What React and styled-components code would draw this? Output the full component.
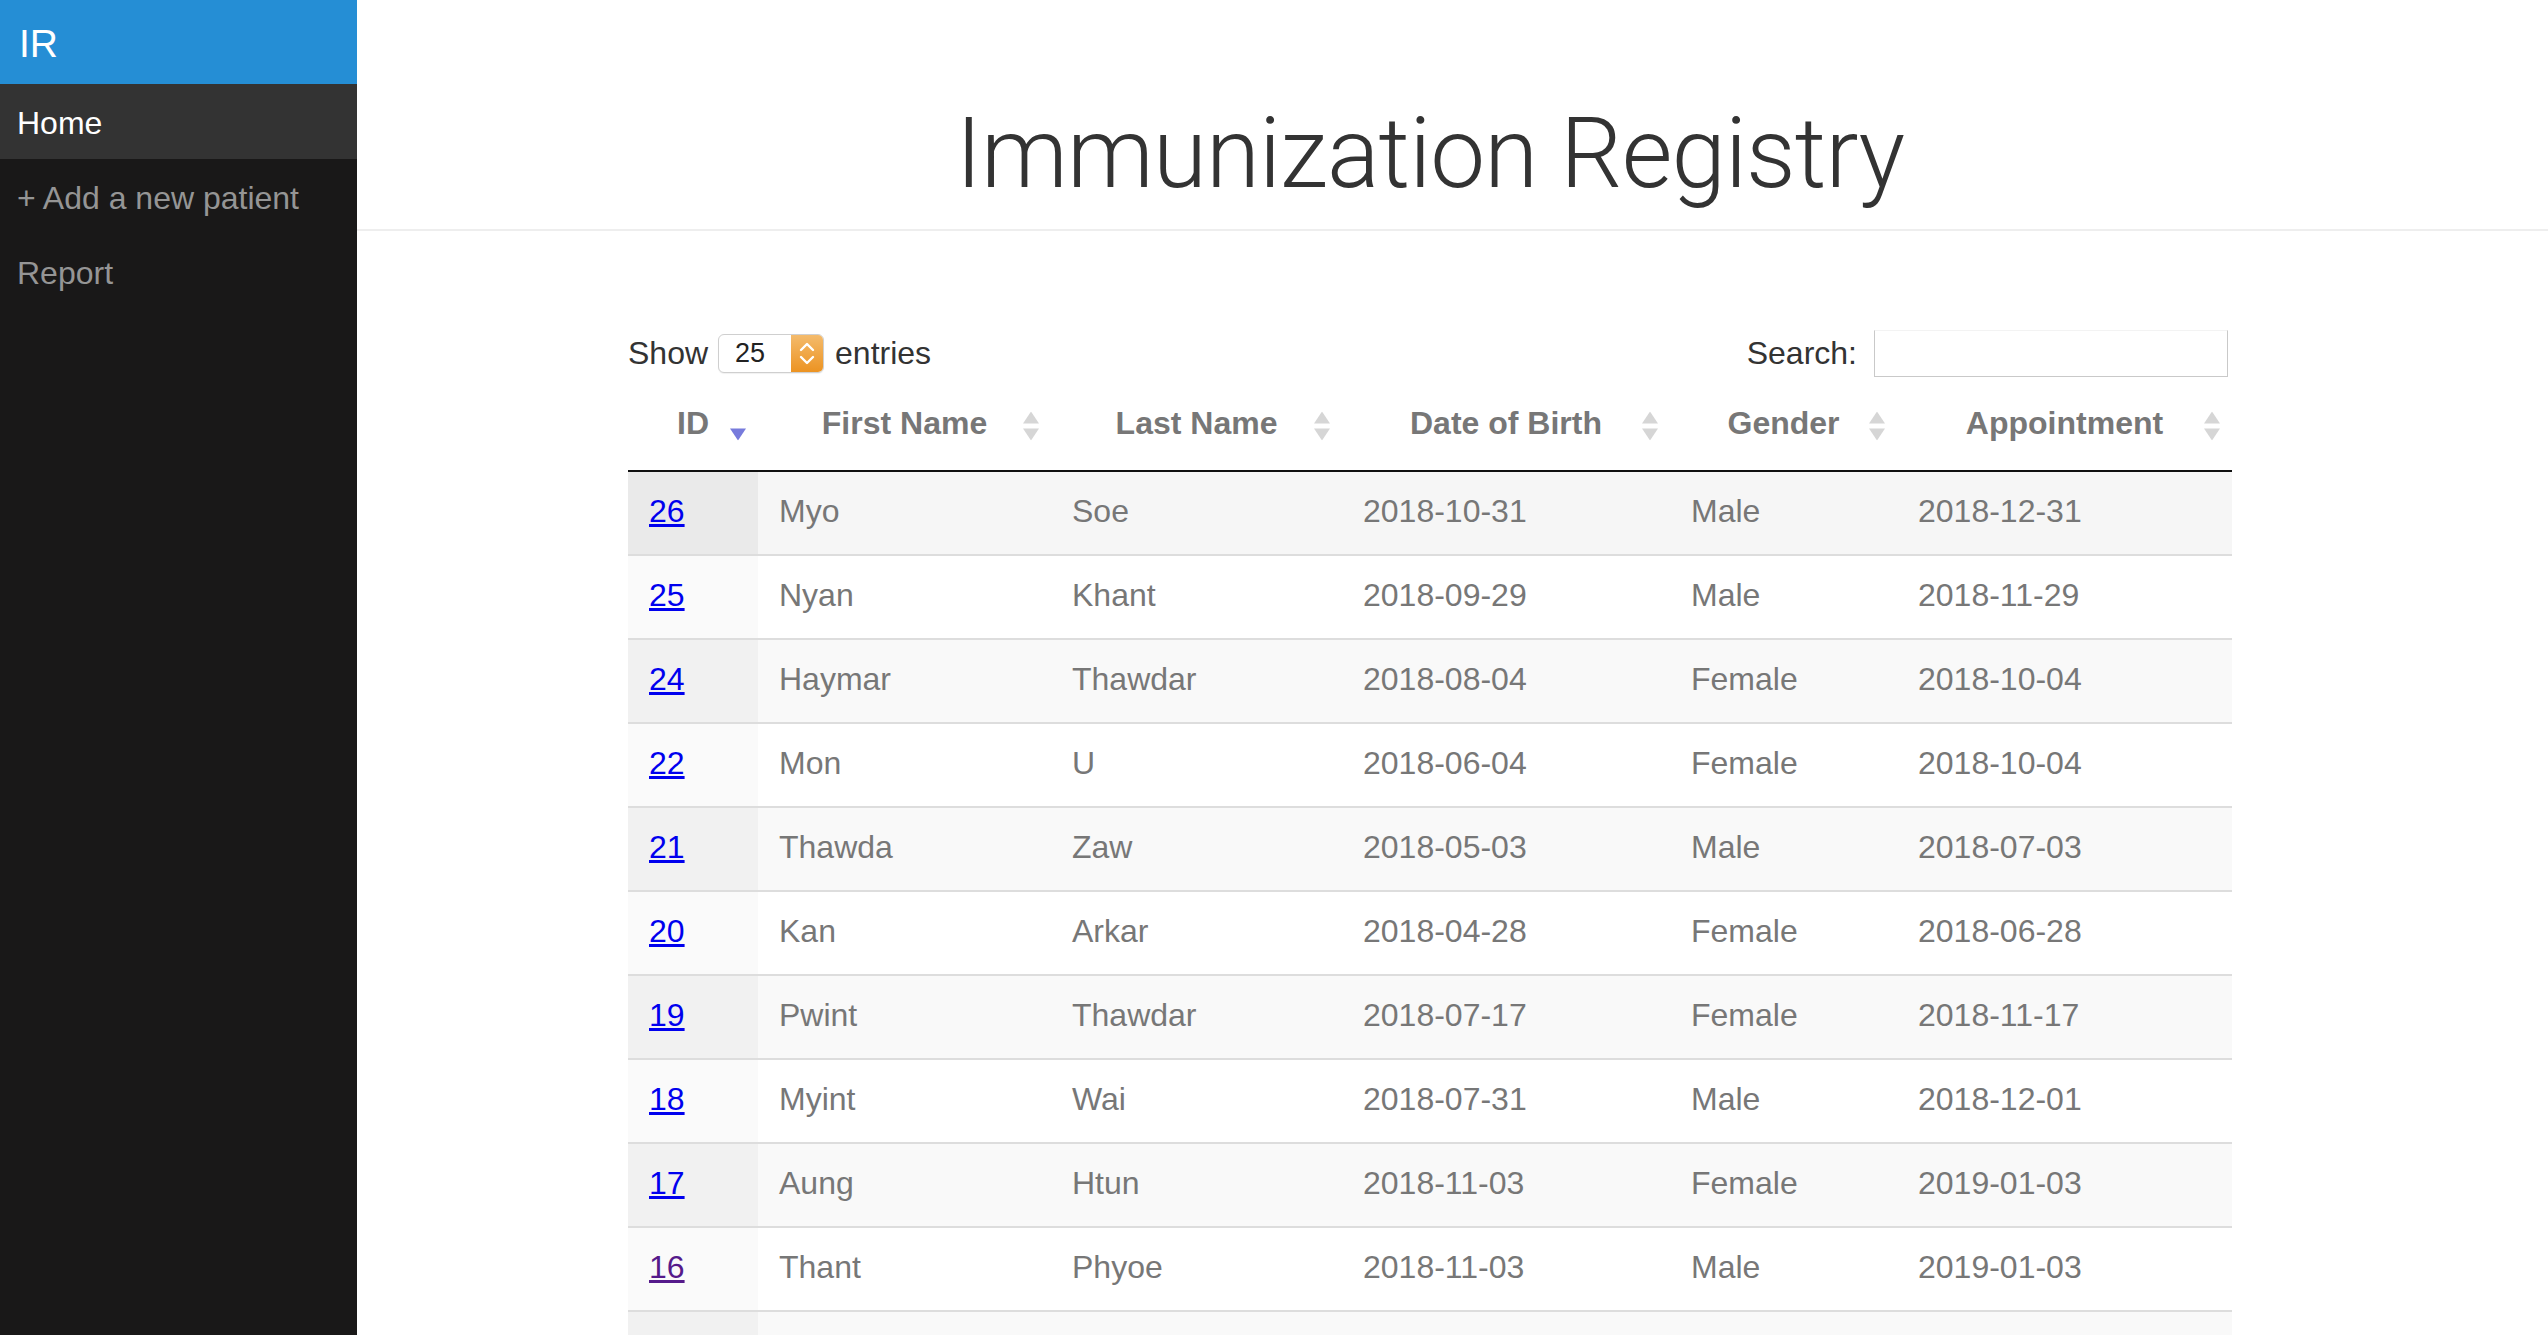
import React from 'react';
import styled, { createGlobalStyle } from 'styled-components';

const patients = [
    { id: 26, first: 'Myo', last: 'Soe', dob: '2018-10-31', gender: 'Male', appt: '2018-12-31' },
    { id: 25, first: 'Nyan', last: 'Khant', dob: '2018-09-29', gender: 'Male', appt: '2018-11-29' },
    { id: 24, first: 'Haymar', last: 'Thawdar', dob: '2018-08-04', gender: 'Female', appt: '2018-10-04' },
    { id: 22, first: 'Mon', last: 'U', dob: '2018-06-04', gender: 'Female', appt: '2018-10-04' },
    { id: 21, first: 'Thawda', last: 'Zaw', dob: '2018-05-03', gender: 'Male', appt: '2018-07-03' },
    { id: 20, first: 'Kan', last: 'Arkar', dob: '2018-04-28', gender: 'Female', appt: '2018-06-28' },
    { id: 19, first: 'Pwint', last: 'Thawdar', dob: '2018-07-17', gender: 'Female', appt: '2018-11-17' },
    { id: 18, first: 'Myint', last: 'Wai', dob: '2018-07-31', gender: 'Male', appt: '2018-12-01' },
    { id: 17, first: 'Aung', last: 'Htun', dob: '2018-11-03', gender: 'Female', appt: '2019-01-03' },
    { id: 16, first: 'Thant', last: 'Phyoe', dob: '2018-11-03', gender: 'Male', appt: '2019-01-03', visited: true },
    { id: 15, first: 'Su', last: 'Mon', dob: '2018-10-12', gender: 'Female', appt: '2018-12-12' },
];

const columns = [
    { key: 'id', label: 'ID', width: 130, sort: 'desc' },
    { key: 'first', label: 'First Name', width: 293 },
    { key: 'last', label: 'Last Name', width: 291 },
    { key: 'dob', label: 'Date of Birth', width: 328 },
    { key: 'gender', label: 'Gender', width: 227 },
    { key: 'appt', label: 'Appointment', width: 335 },
];

const SortIcon = ({ mode }) => (
    <SortMark viewBox="0 0 18 29" width="18" height="29">
        {mode !== 'desc' && <polygon points="9,0 17,12 1,12" fill="#d6d6d6" />}
        <polygon points="1,17 17,17 9,29" fill={mode === 'desc' ? '#777bdc' : '#d6d6d6'} />
    </SortMark>
);

const App = () => {
    return (
        <>
            <GlobalStyle />
            <Layout>
                <Sidebar>
                    <Brand>IR</Brand>
                    <MenuList>
                        <li><MenuLink href="#" $active>Home</MenuLink></li>
                        <li><MenuLink href="#">+ Add a new patient</MenuLink></li>
                        <li><MenuLink href="#">Report</MenuLink></li>
                    </MenuList>
                </Sidebar>

                <Main>
                    <Header>
                        <Title>Immunization Registry</Title>
                    </Header>

                    <Content>
                        <TableWrap>
                            <Controls>
                                <ControlLabel>
                                    Show
                                    <Select>
                                        <SelectValue>25</SelectValue>
                                        <Stepper>
                                            <svg width="32" height="37" viewBox="0 0 32 37">
                                                <polyline points="10,15 16,9 22,15" fill="none" stroke="#fff" strokeWidth="2.4" strokeLinecap="round" strokeLinejoin="round" />
                                                <polyline points="10,22 16,28 22,22" fill="none" stroke="#fff" strokeWidth="2.4" strokeLinecap="round" strokeLinejoin="round" />
                                            </svg>
                                        </Stepper>
                                    </Select>
                                    entries
                                </ControlLabel>
                                <ControlLabel>
                                    Search:
                                    <SearchInput type="search" />
                                </ControlLabel>
                            </Controls>

                            <Table>
                                <colgroup>
                                    {columns.map(c => <col key={c.key} style={{ width: c.width }} />)}
                                </colgroup>
                                <thead>
                                    <tr>
                                        {columns.map(c => (
                                            <Th key={c.key}>
                                                {c.label}
                                                <SortIcon mode={c.sort} />
                                            </Th>
                                        ))}
                                    </tr>
                                </thead>
                                <tbody>
                                    {patients.map((p, i) => {
                                        const tone = i === 0 ? 'hover' : i % 2 === 0 ? 'odd' : 'even';
                                        return (
                                            <tr key={p.id}>
                                                <Td $tone={tone} $sorted $first={i === 0}>
                                                    <IdLink href="#" $visited={p.visited}>{p.id}</IdLink>
                                                </Td>
                                                <Td $tone={tone} $first={i === 0}>{p.first}</Td>
                                                <Td $tone={tone} $first={i === 0}>{p.last}</Td>
                                                <Td $tone={tone} $first={i === 0}>{p.dob}</Td>
                                                <Td $tone={tone} $first={i === 0}>{p.gender}</Td>
                                                <Td $tone={tone} $first={i === 0}>{p.appt}</Td>
                                            </tr>
                                        );
                                    })}
                                </tbody>
                            </Table>
                        </TableWrap>
                    </Content>
                </Main>
            </Layout>
        </>
    );
};

const rowColors = {
    hover: ['#f6f6f6', '#eaeaea'],
    odd: ['#f9f9f9', '#f1f1f1'],
    even: ['#ffffff', '#fafafa'],
};

const GlobalStyle = createGlobalStyle`
    html, body {
        margin: 0;
        padding: 0;
        height: 100%;
        overflow: hidden;
    }
    body {
        font-family: "Liberation Sans", Arial, Helvetica, sans-serif;
        background: #fff;
        color: #333;
    }
`;

const Layout = styled.div`
    display: flex;
    height: 100vh;
`;

const Sidebar = styled.nav`
    width: 357px;
    flex-shrink: 0;
    background: #191818;
`;

const Brand = styled.div`
    height: 84px;
    box-sizing: border-box;
    padding: 22px 19px 0;
    background: #258ed5;
    color: #fff;
    font-size: 39px;
`;

const MenuList = styled.ul`
    list-style: none;
    margin: 0;
    padding: 0;
`;

const MenuLink = styled.a`
    display: block;
    height: 75px;
    box-sizing: border-box;
    padding: 21px 17px 0;
    font-size: 32px;
    text-decoration: none;
    color: ${p => (p.$active ? '#fff' : '#959595')};
    background: ${p => (p.$active ? '#333' : 'transparent')};
`;

const Main = styled.main`
    flex: 1;
    min-width: 0;
    overflow: hidden;
`;

const Header = styled.header`
    padding: 96px 45px 18px 0;
    border-bottom: 2px solid #eee;
    text-align: center;
`;

const Title = styled.h1`
    margin: 0;
    font-family: Roboto, "Liberation Sans", sans-serif;
    font-weight: 300;
    font-size: 98px;
    letter-spacing: -0.9px;
    color: #333;
`;

const Content = styled.div`
    padding: 99px 45px 0 0;
`;

const TableWrap = styled.div`
    width: 1604px;
    margin: 0 auto;
`;

const Controls = styled.div`
    display: flex;
    justify-content: space-between;
    align-items: center;
    height: 47px;
`;

const ControlLabel = styled.label`
    display: flex;
    align-items: center;
    font-size: 32px;
    line-height: 37px;
    color: #333;
`;

const Select = styled.span`
    display: inline-flex;
    width: 106px;
    height: 39px;
    box-sizing: border-box;
    margin: 0 11px 0 10px;
    border: 1px solid #cfcfcf;
    border-radius: 6px;
    overflow: hidden;
    background: #fff;
    box-shadow: 0 1px 1px rgba(0, 0, 0, 0.06);
`;

const SelectValue = styled.span`
    flex: 1;
    padding-left: 16px;
    font-size: 27px;
    line-height: 37px;
    color: #222;
`;

const Stepper = styled.span`
    width: 32px;
    display: flex;
    align-items: center;
    justify-content: center;
    background: linear-gradient(#f4bb6c, #ec9322);
`;

const SearchInput = styled.input`
    width: 354px;
    height: 47px;
    box-sizing: border-box;
    margin: 0 4px 0 17px;
    border: 1px solid #c9c9c9;
    border-top-color: #f3f3f3;
    background: #fff;
    outline: none;
`;

const Table = styled.table`
    width: 1604px;
    margin-top: 4px;
    table-layout: fixed;
    border-collapse: separate;
    border-spacing: 0;
    font-size: 32px;
    line-height: 37px;
`;

const Th = styled.th`
    position: relative;
    padding: 24px 30px 28px;
    border-bottom: 2px solid #111;
    text-align: center;
    font-weight: bold;
    color: #777;
    white-space: nowrap;
`;

const SortMark = styled.svg`
    position: absolute;
    right: 11px;
    top: 50%;
    transform: translateY(-50%);
`;

const Td = styled.td`
    padding: 21px 21px 24px;
    color: #777;
    white-space: nowrap;
    border-top: ${p => (p.$first ? 'none' : '2px solid #dddddd')};
    background: ${p => rowColors[p.$tone][p.$sorted ? 1 : 0]};
`;

const IdLink = styled.a`
    color: ${p => (p.$visited ? '#551a8b' : '#0000ee')};
    text-decoration: underline;
`;

export default App;
